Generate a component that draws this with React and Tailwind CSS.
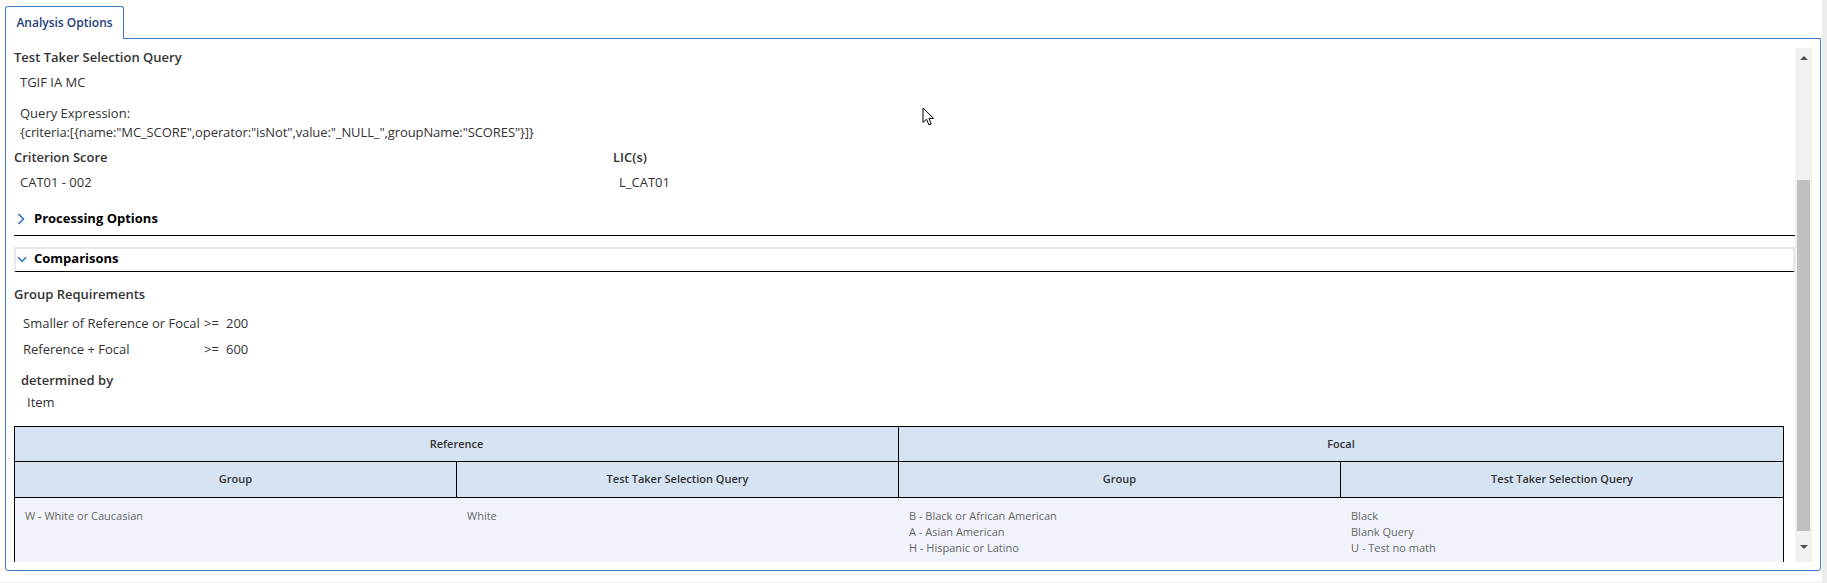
import React from "react";

const font = { fontFamily: "'Open Sans', 'Noto Sans', sans-serif" };

const ChevronRight = () => (
  <svg width="8" height="12" viewBox="0 0 8 12" className="block">
    <path d="M1.5 1 L6.5 6 L1.5 11" fill="none" stroke="#2f6fc0" strokeWidth="1.6" />
  </svg>
);

const ChevronDown = () => (
  <svg width="10" height="7" viewBox="0 0 10 7" className="block">
    <path d="M1 1.2 L5 5.4 L9 1.2" fill="none" stroke="#2f6fc0" strokeWidth="1.5" />
  </svg>
);

const Cursor = () => (
  <svg width="13" height="20" viewBox="0 0 13 20" className="absolute left-[922px] top-[107px] z-20">
    <path
      d="M1 1 L1 15.5 L4.5 12.2 L7 18 L9.3 17 L6.9 11.4 L11.6 11.4 Z"
      fill="#fff"
      stroke="#000"
      strokeWidth="1"
      strokeLinejoin="round"
    />
  </svg>
);

const Scrollbar = () => (
  <div className="mt-[9px] mb-[8px] w-[17px] bg-[#f1f1f1] flex flex-col items-center">
    <div className="h-[20px] flex items-center justify-center">
      <div className="w-0 h-0 border-l-[4px] border-r-[4px] border-b-[4px] border-l-transparent border-r-transparent border-b-[#505050]" />
    </div>
    <div className="h-[112px]" />
    <div className="w-[13px] h-[351px] bg-[#c1c1c1]" />
    <div className="flex-1 flex items-center justify-center">
      <div className="w-0 h-0 border-l-[4px] border-r-[4px] border-t-[4px] border-l-transparent border-r-transparent border-t-[#505050]" />
    </div>
  </div>
);

const groups = [
  {
    refGroup: ["W - White or Caucasian"],
    refQuery: ["White"],
    focGroup: ["B - Black or African American", "A - Asian American", "H - Hispanic or Latino"],
    focQuery: ["Black", "Blank Query", "U - Test no math"],
  },
];

const App = () => {
  return (
    <div className="relative w-[1827px] h-[583px] bg-white overflow-hidden flex" style={font}>
      <div className="w-[1822px] h-[582px] flex flex-col">
        {/* tab strip */}
        <div className="pl-[5px] pt-[6px] flex">
          <div className="relative z-10 -mb-px w-[119px] h-[33px] bg-white border border-b-0 border-[#3c7ac8] rounded-t-[3px] flex items-center justify-center">
            <span className="text-[12px] font-semibold text-[#1d3f78]">Analysis Options</span>
          </div>
        </div>

        {/* panel */}
        <div className="ml-[5px] w-[1816px] h-[533px] border border-[#3c7ac8] rounded-b-[3px] flex">
          <div className="flex-1 overflow-hidden mt-[9px] mb-[8px] pl-[8px] text-[#333]">
            <div className="text-[13px] leading-[18px] font-semibold">Test Taker Selection Query</div>
            <div className="mt-[7px] pl-[6px] text-[13px] leading-[18px]">TGIF IA MC</div>
            <div className="mt-[13px] pl-[6px] text-[13px] leading-[19px]">
              <div>Query Expression:</div>
              <div className="tracking-[-0.1px]">
                {'{criteria:[{name:"MC_SCORE",operator:"isNot",value:"_NULL_",groupName:"SCORES"}]}'}
              </div>
            </div>

            <div className="mt-[6px] flex text-[13px] leading-[18px]">
              <div className="w-[599px]">
                <div className="font-semibold">Criterion Score</div>
                <div className="mt-[7px] pl-[6px]">CAT01 - 002</div>
              </div>
              <div>
                <div className="font-semibold">LIC(s)</div>
                <div className="mt-[7px] pl-[6px]">L_CAT01</div>
              </div>
            </div>

            {/* Processing Options */}
            <div className="mt-[12px] h-[33px] border-b border-black flex items-center">
              <div className="w-[20px] pl-[3px]">
                <ChevronRight />
              </div>
              <span className="text-[13px] font-bold text-black">Processing Options</span>
            </div>

            {/* Comparisons */}
            <div className="mt-[11px] h-[25px] pb-[2px] border-t-2 border-l-2 border-r-2 border-[#e8e8e8] border-b border-b-black flex items-center">
              <div className="w-[18px] pl-[1px]">
                <ChevronDown />
              </div>
              <span className="text-[13px] font-bold text-black">Comparisons</span>
            </div>

            <div className="mt-[13px] text-[13px] leading-[18px] font-semibold">Group Requirements</div>
            <div className="mt-[11px] pl-[9px] text-[13px] leading-[18px]">
              <div className="flex">
                <span className="w-[181px]">Smaller of Reference or Focal</span>
                <span className="w-[22px]">&gt;=</span>
                <span>200</span>
              </div>
              <div className="mt-[8px] flex">
                <span className="w-[181px]">Reference + Focal</span>
                <span className="w-[22px]">&gt;=</span>
                <span>600</span>
              </div>
            </div>
            <div className="mt-[13px] pl-[7px] text-[13px] leading-[18px] font-semibold">determined by</div>
            <div className="mt-[4px] pl-[13px] text-[13px] leading-[18px]">Item</div>

            {/* table */}
            <div className="mt-[15px] w-[1770px] border border-black">
              <div className="grid grid-cols-2 h-[35px] border-b border-black bg-[#d6e3f3] text-[11px] font-semibold text-[#333]">
                <div className="flex items-center justify-center border-r border-black">Reference</div>
                <div className="flex items-center justify-center">Focal</div>
              </div>
              <div className="grid grid-cols-4 h-[36px] border-b border-black bg-[#d6e3f3] text-[11px] font-semibold text-[#333]">
                <div className="flex items-center justify-center border-r border-black">Group</div>
                <div className="flex items-center justify-center border-r border-black">Test Taker Selection Query</div>
                <div className="flex items-center justify-center border-r border-black">Group</div>
                <div className="flex items-center justify-center">Test Taker Selection Query</div>
              </div>
              {groups.map((g, i) => (
                <div key={i} className="grid grid-cols-4 bg-[#f0f4fa] text-[11px] leading-[16px] text-[#666] pt-[10px] pb-[16px]">
                  {[g.refGroup, g.refQuery, g.focGroup, g.focQuery].map((col, j) => (
                    <div key={j} className="pl-[10px]">
                      {col.map((t) => (
                        <div key={t}>{t}</div>
                      ))}
                    </div>
                  ))}
                </div>
              ))}
            </div>
          </div>
          <Scrollbar />
          <div className="w-[8px]" />
        </div>
        <div className="flex-1" />
      </div>
      <div className="w-[5px] h-full bg-[#ececec]" />
      <div className="absolute left-0 bottom-0 w-full h-px bg-[#ececec]" />
      <Cursor />
    </div>
  );
};

export default App;
